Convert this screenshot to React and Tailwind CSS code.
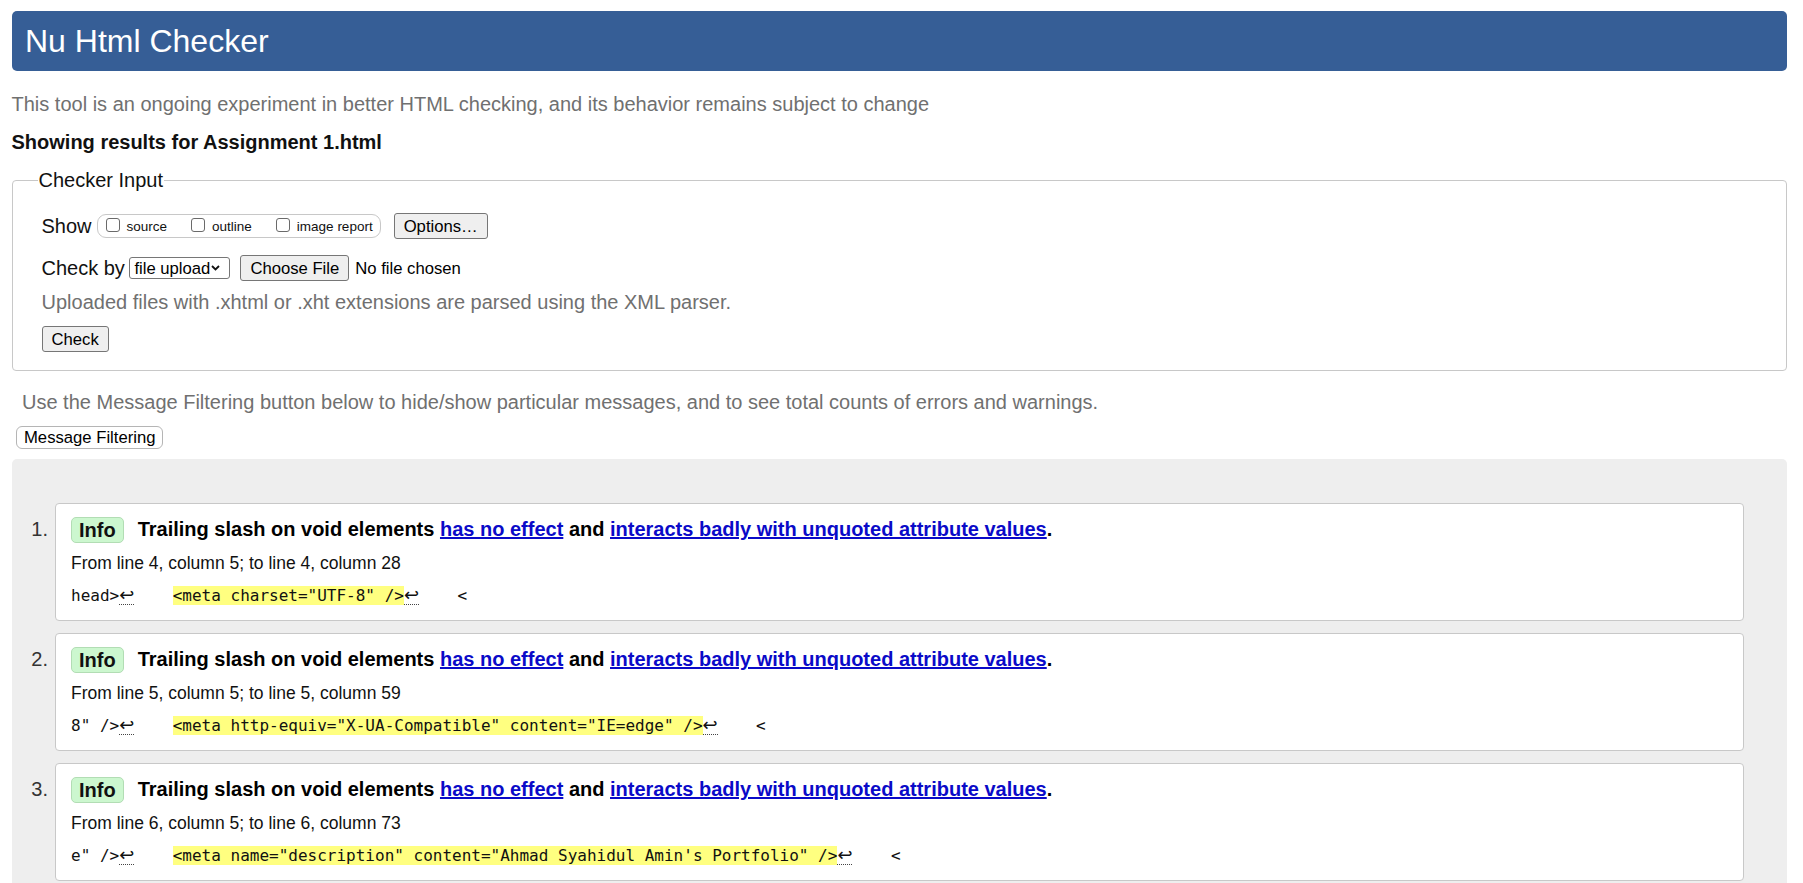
import React from "react";

const messages = [
  {
    from: "From line 4, column 5; to line 4, column 28",
    before: "head>",
    code: '<meta charset="UTF-8" />',
  },
  {
    from: "From line 5, column 5; to line 5, column 59",
    before: '8" />',
    code: '<meta http-equiv="X-UA-Compatible" content="IE=edge" />',
  },
  {
    from: "From line 6, column 5; to line 6, column 73",
    before: 'e" />',
    code: '<meta name="description" content="Ahmad Syahidul Amin\'s Portfolio" />',
  },
];

const btn =
  "h-[26px] px-[9px] bg-[#efefef] border border-[#767676] rounded-[3px] text-[16.67px] text-black flex items-center";

const Box = () => (
  <span className="w-[14px] h-[14px] mb-[3px] bg-white border border-[#6a6a6a] rounded-[3px] shrink-0" />
);

// line break mark in the code extract
const Lf = () => (
  <span className="inline-block w-[15px] border-b border-dotted border-[#444] font-['DejaVu_Sans',sans-serif] text-[18px] leading-[19px]">
    ↩
  </span>
);

const Message = ({ n, msg }) => (
  <div className="flex">
    <span className="w-[43.5px] shrink-0 text-right pr-[7px] pt-[15.5px] leading-[23px] text-[#333]">
      {n}.
    </span>
    <div className="flex-1 bg-white border border-[#c8c8c8] rounded-[4px] pl-[15px] pt-[13px] pb-[14px]">
      <div className="flex items-center h-[26px]">
        <span className="h-[26px] px-[7px] flex items-center font-bold bg-[#ccf7cf] border border-[#b2ddb4] rounded-[5px]">
          Info
        </span>
        <span className="ml-[14px] font-bold leading-[23px] whitespace-nowrap text-black">
          Trailing slash on void elements{" "}
          <a className="text-[#0a0ac8] underline">has no effect</a> and{" "}
          <a className="text-[#0a0ac8] underline">
            interacts badly with unquoted attribute values
          </a>
          .
        </span>
      </div>
      <p className="mt-[9.5px] text-[17.5px] leading-[23px] text-[#111]">{msg.from}</p>
      <div className="mt-[9.5px] font-['DejaVu_Sans_Mono',monospace] text-[16px] leading-[20px] whitespace-pre text-[#111]">
        {msg.before}
        <Lf />
        {"    "}
        <span className="bg-[#ffff80]">{msg.code}</span>
        <Lf />
        {"    <"}
      </div>
    </div>
  </div>
);

export default function App() {
  return (
    <div className="min-h-screen bg-white font-['Liberation_Sans',Arial,sans-serif] text-[20px] text-[#111] pl-[11.5px] pr-[16px] pt-[11px]">
      {/* header */}
      <div className="h-[60px] rounded-[5px] bg-[#365e96] flex items-center pl-[13.5px]">
        <h1 className="text-[32px] text-white font-normal leading-none">Nu Html Checker</h1>
      </div>

      <p className="mt-[22px] leading-[23px] text-[#707070]">
        This tool is an ongoing experiment in better HTML checking, and its behavior remains subject to change
      </p>
      <p className="mt-[15px] leading-[23px] font-bold">Showing results for Assignment 1.html</p>

      {/* checker input */}
      <fieldset className="mt-[15px] border border-[#c8c8c8] rounded-[4px] pl-[29px] pb-[18px]">
        <legend className="ml-[-4px] px-[1px] leading-[23px]">Checker Input</legend>

        <div className="mt-[21px] flex items-center h-[26px]">
          <span>Show</span>
          <div className="ml-[5.5px] h-[24px] flex items-center border border-[#c8c8c8] rounded-[9px] pl-[7.5px] pr-[7px] text-[13.5px]">
            <Box />
            <span className="ml-[7px] mt-[2px]">source</span>
            <span className="ml-[24px]" />
            <Box />
            <span className="ml-[7px] mt-[2px]">outline</span>
            <span className="ml-[24px]" />
            <Box />
            <span className="ml-[7px] mt-[2px]">image report</span>
          </div>
          <button className={`${btn} ml-[13px]`}>Options…</button>
        </div>

        <div className="mt-[16px] flex items-center h-[26px]">
          <span>Check by</span>
          <div className="ml-[4.5px] h-[22px] w-[101px] flex items-center justify-between pl-[4px] pr-[9px] bg-white border border-[#767676] rounded-[3px] text-[16.67px] text-black">
            <span>file upload</span>
            <svg width="9" height="6" viewBox="0 0 9 6" fill="none">
              <path d="M1 1l3.5 3.5L8 1" stroke="#111" strokeWidth="1.8" />
            </svg>
          </div>
          <button className={`${btn} ml-[10px]`}>Choose File</button>
          <span className="ml-[6px] text-[16.67px] text-black">No file chosen</span>
        </div>

        <p className="mt-[9.5px] leading-[23px] text-[#707070]">
          Uploaded files with .xhtml or .xht extensions are parsed using the XML parser.
        </p>
        <div className="mt-[12.5px] flex">
          <button className={btn}>Check</button>
        </div>
      </fieldset>

      <p className="mt-[20px] pl-[10.5px] leading-[23px] text-[#707070]">
        Use the Message Filtering button below to hide/show particular messages, and to see total counts of errors and warnings.
      </p>
      <button className="mt-[11.5px] ml-[4.5px] h-[23px] px-[7px] flex items-center bg-white border border-[#b5b5b5] rounded-[6px] text-[16.67px] text-black">
        Message Filtering
      </button>

      {/* results */}
      <div className="mt-[10px] bg-[#eeeeee] rounded-t-[5px] pt-[44px] pr-[43px] pb-[44px] flex flex-col gap-[12px]">
        {messages.map((m, i) => (
          <Message key={i} n={i + 1} msg={m} />
        ))}
      </div>
    </div>
  );
}
